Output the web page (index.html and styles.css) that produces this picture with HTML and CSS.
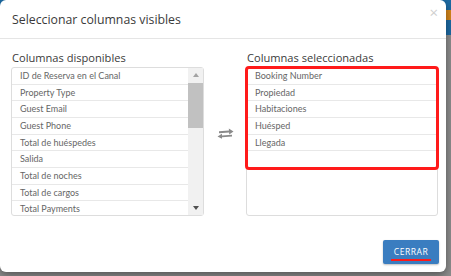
FILE: index.html
```html
<!DOCTYPE html>
<html lang="es">
<head>
    <meta charset="UTF-8">
    <title>Seleccionar columnas visibles</title>
    <link rel="stylesheet" href="styles.css">
</head>
<body>

<div class="modal">
    <div class="modal-header">
        <h4 class="modal-title">Seleccionar columnas visibles</h4>
        <span class="close">&times;</span>
    </div>

    <div class="modal-body">
        <!-- Columnas disponibles -->
        <div class="column">
            <div class="column-title">Columnas disponibles</div>
            <div class="list-box">
                <ul class="list">
                    <li>ID de Reserva en el Canal</li>
                    <li>Property Type</li>
                    <li>Guest Email</li>
                    <li>Guest Phone</li>
                    <li>Total de huéspedes</li>
                    <li>Salida</li>
                    <li>Total de noches</li>
                    <li>Total de cargos</li>
                    <li>Total Payments</li>
                </ul>
                <div class="scrollbar">
                    <span class="arrow up"></span>
                    <span class="thumb"></span>
                    <span class="arrow down"></span>
                </div>
            </div>
        </div>

        <div class="swap">
            <svg width="17" height="11" viewBox="0 0 17 11">
                <path d="M2 3.2 L12 2.4 L11.8 0.6 L16.5 3.4 L12.2 6.4 L12.1 4.6 L2 5.2 Z" fill="#8a8a8a"/>
                <path d="M15 6.8 L5 7.4 L5 5.8 L0.5 8.4 L5 10.8 L5 9.2 L15 8.6 Z" fill="#8a8a8a"/>
            </svg>
        </div>

        <!-- Columnas seleccionadas -->
        <div class="column">
            <div class="column-title">Columnas seleccionadas</div>
            <div class="list-box">
                <ul class="list selected">
                    <li>Booking Number</li>
                    <li>Propiedad</li>
                    <li>Habitaciones</li>
                    <li>Huésped</li>
                    <li>Llegada</li>
                    <li></li>
                </ul>
            </div>
        </div>
    </div>

    <div class="modal-footer">
        <button class="button"><span class="mark">CERRAR</span></button>
    </div>
</div>

</body>
</html>
```
FILE: styles.css
```css
body {
    margin: 0;
    padding: 0;
    font-family: "Open Sans", sans-serif;
    color: #3a3a3a;
    background: linear-gradient(#1c6aa3 0 10px, #d4861c 10px 20px, #1c6aa3 20px 35px, #8d8d8d 35px);
    height: 276px;
    overflow: hidden;
}

.modal {
    width: 446px;
    height: 272px;
    background-color: #fff;
    border-radius: 6px;
    box-shadow: 0 3px 9px rgba(0, 0, 0, 0.4);
    display: flex;
    flex-direction: column;
}

.modal-header {
    display: flex;
    justify-content: space-between;
    align-items: center;
    height: 39px;
    padding: 0 8px 0 12px;
    box-sizing: border-box;
    border-bottom: 1px solid #e5e5e5;
}

.modal-title {
    margin: 0;
    font-size: 12.3px;
    font-weight: normal;
    line-height: 20px;
    padding-top: 1px;
}

.close {
    color: #cfcfcf;
    font-size: 15px;
    line-height: 15px;
    align-self: flex-start;
    margin-top: 5px;
}

.modal-body {
    display: flex;
    align-items: center;
    padding: 10px 8px 0 11px;
}

.column {
    width: 193px;
}

.column + .swap + .column {
    width: 192px;
}

.column-title {
    font-size: 11.1px;
    line-height: 18px;
    padding-left: 1px;
}

.list-box {
    display: flex;
    height: 149px;
    box-sizing: border-box;
    border: 1px solid #ddd;
    border-radius: 3px;
}

.list {
    flex: 1;
    margin: 0;
    padding: 0;
    list-style: none;
    font-family: Lato, sans-serif;
    font-size: 9px;
    color: #666;
}

.list li {
    height: 16.67px;
    box-sizing: border-box;
    line-height: 16px;
    padding-left: 8px;
    border-bottom: 1px solid #e8e8e8;
}

.list li:last-child {
    border-bottom: 0;
}

.list.selected {
    flex: none;
    width: 100%;
    align-self: flex-start;
    outline: 3px solid #ff1a1a;
    outline-offset: -1px;
    border-radius: 2px;
}

.scrollbar {
    width: 15px;
    background-color: #f1f1f1;
    display: flex;
    flex-direction: column;
    align-items: center;
}

.thumb {
    width: 100%;
    height: 45px;
    background-color: #c1c1c1;
}

.arrow {
    width: 0;
    height: 0;
    border-left: 3.5px solid transparent;
    border-right: 3.5px solid transparent;
}

.arrow.up {
    border-bottom: 4px solid #a3a3a3;
    margin: 5px 0 6px;
}

.arrow.down {
    border-top: 4px solid #505050;
    margin: auto 0 5px;
}

.swap {
    width: 42px;
    display: flex;
    justify-content: center;
    padding-top: 2px;
}

.modal-footer {
    display: flex;
    justify-content: flex-end;
    padding: 24px 7px 0 0;
}

.button {
    width: 56px;
    height: 24px;
    border: 0;
    border-radius: 2px;
    background-color: #3a7dc0;
    color: #fff;
    font-family: "Open Sans", sans-serif;
    font-size: 8.6px;
    letter-spacing: 0.5px;
    padding: 0;
    box-shadow: 0 1px 2px rgba(0, 0, 0, 0.25);
}

.mark {
    display: inline-block;
    border-bottom: 2px solid #ff1a1a;
    padding: 0 3px 1px 3px;
    line-height: 11px;
    margin-top: 3px;
}
```
